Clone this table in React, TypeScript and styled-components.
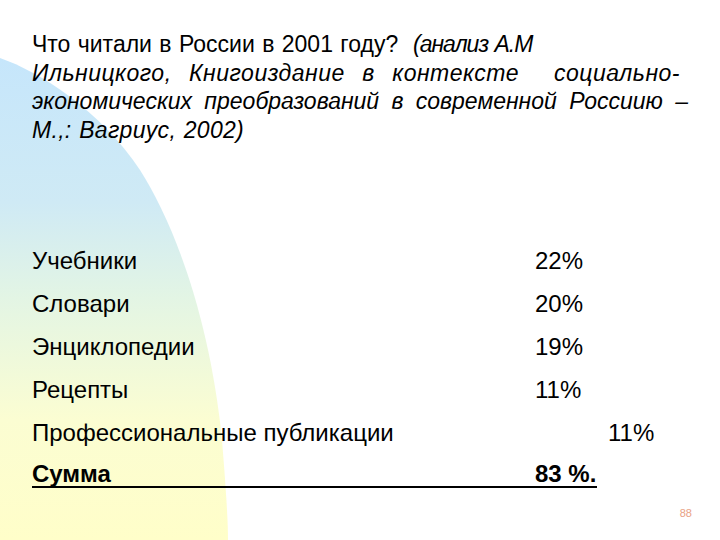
import React from "react";
import styled, { createGlobalStyle } from "styled-components";

const Global = createGlobalStyle`
  html, body { margin: 0; padding: 0; background: #ffffff; }
  body { font-family: "Liberation Sans", Arial, sans-serif; color: #000; }
`;

const Slide = styled.div`
  position: relative;
  width: 720px;
  height: 540px;
  overflow: hidden;
  background: #ffffff;
`;

const Backdrop = styled.svg`
  position: absolute;
  left: 0;
  top: 0;
  z-index: 0;
`;

const Content = styled.div`
  position: relative;
  z-index: 1;
  display: flex;
  flex-direction: column;
  padding: 30px 0 0 32px;
`;

const Title = styled.div`
  font-size: 23px;
  line-height: 28.7px;
  display: flex;
  flex-direction: column;
  align-items: flex-start;
`;

const Line = styled.span<{ $justify?: number }>`
  white-space: nowrap;
  word-spacing: 1px;
  ${(p) =>
    p.$justify
      ? `width: ${p.$justify}px; text-align: justify; text-align-last: justify; word-spacing: 0;`
      : ""}
`;

const Italic = styled.span<{ $track?: number }>`
  font-style: italic;
  letter-spacing: ${(p) => p.$track ?? 0}px;
`;

const List = styled.div`
  display: flex;
  flex-direction: column;
  margin-top: 94px;
`;

const Row = styled.div<{ $total?: boolean }>`
  display: grid;
  grid-template-columns: 503px auto;
  width: 565px;
  font-size: 24px;
  line-height: ${(p) => (p.$total ? "24px" : "43px")};
  font-weight: ${(p) => (p.$total ? 700 : 400)};
  border-bottom: ${(p) => (p.$total ? "2px solid #000" : "none")};
  margin-top: ${(p) => (p.$total ? "8px" : "0")};
`;

const Value = styled.span<{ $shift?: number }>`
  padding-left: ${(p) => p.$shift ?? 0}px;
`;

const PageNo = styled.div`
  position: absolute;
  right: 28px;
  bottom: 21px;
  z-index: 1;
  font-family: "Liberation Sans", Arial, sans-serif;
  font-size: 11px;
  color: #e9a184;
`;

const rows: { label: string; value: string; shift?: number }[] = [
  { label: "Учебники", value: "22%" },
  { label: "Словари", value: "20%" },
  { label: "Энциклопедии", value: "19%" },
  { label: "Рецепты", value: "11%" },
  { label: "Профессиональные публикации", value: "11%", shift: 73 },
];

export default function App() {
  return (
    <>
      <Global />
      <Slide>
        <Backdrop width="720" height="540" viewBox="0 0 720 540">
          <defs>
            <linearGradient id="bg" x1="0" y1="58" x2="0" y2="540" gradientUnits="userSpaceOnUse">
              <stop offset="0" stopColor="#c6e6fb" />
              <stop offset="0.3" stopColor="#cfeaf5" />
              <stop offset="0.5" stopColor="#e3f5e4" />
              <stop offset="0.75" stopColor="#fbfdd2" />
              <stop offset="1" stopColor="#fffec9" />
            </linearGradient>
          </defs>
          <path
            d="M0,58 C40,72 100,110 140,170 C175,225 210,320 222,440 C226,490 228,520 228,540 L0,540 Z"
            fill="url(#bg)"
          />
        </Backdrop>
        <Content>
          <Title>
            <Line>
              Что читали в России в 2001 году?{"\u00a0 "}
              <Italic $track={-1}>(анализ А.М</Italic>
            </Line>
            <Line $justify={648}>
              <Italic $track={0.5}>Ильницкого, Книгоиздание в контексте{"\u00a0 "}социально-</Italic>
            </Line>
            <Line $justify={656}>
              <Italic>экономических преобразований в современной Россиию –</Italic>
            </Line>
            <Line>
              <Italic $track={0.3}>М.,: Вагриус, 2002)</Italic>
            </Line>
          </Title>
          <List>
            {rows.map((r) => (
              <Row key={r.label}>
                <span>{r.label}</span>
                <Value $shift={r.shift}>{r.value}</Value>
              </Row>
            ))}
            <Row $total>
              <span>Сумма</span>
              <Value>83 %.</Value>
            </Row>
          </List>
        </Content>
        <PageNo>88</PageNo>
      </Slide>
    </>
  );
}
